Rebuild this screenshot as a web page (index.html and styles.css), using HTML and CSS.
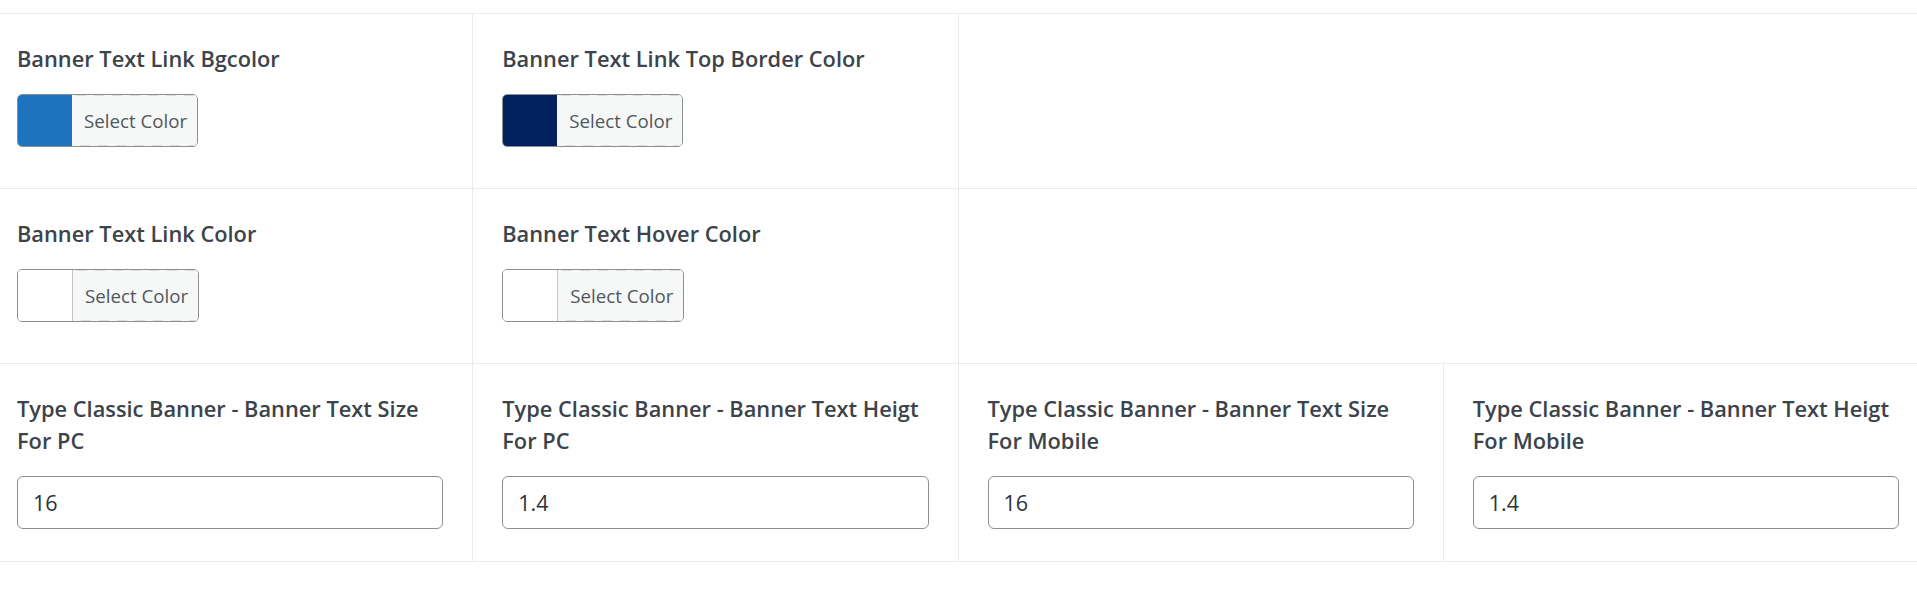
FILE: index.html
```html
<!DOCTYPE html>
<html lang="en">
<head>
<meta charset="utf-8">
<title>Banner settings</title>
<link rel="stylesheet" href="styles.css">
</head>
<body>
<div class="form">
  <div class="row">
    <div class="cell">
      <label class="label">Banner Text Link Bgcolor</label>
      <button class="picker" type="button"><span class="swatch swatch-blue"></span><span class="picker-text">Select Color</span></button>
    </div>
    <div class="cell">
      <label class="label">Banner Text Link Top Border Color</label>
      <button class="picker" type="button"><span class="swatch swatch-navy"></span><span class="picker-text">Select Color</span></button>
    </div>
  </div>
  <div class="row">
    <div class="cell">
      <label class="label">Banner Text Link Color</label>
      <button class="picker" type="button"><span class="swatch swatch-white"></span><span class="picker-text">Select Color</span></button>
    </div>
    <div class="cell">
      <label class="label">Banner Text Hover Color</label>
      <button class="picker" type="button"><span class="swatch swatch-white"></span><span class="picker-text">Select Color</span></button>
    </div>
  </div>
  <div class="row row-last">
    <div class="cell cell-input">
      <label class="label">Type Classic Banner - Banner Text Size For PC</label>
      <input class="field" type="text" value="16">
    </div>
    <div class="cell cell-input">
      <label class="label">Type Classic Banner - Banner Text Heigt For PC</label>
      <input class="field" type="text" value="1.4">
    </div>
    <div class="cell cell-input">
      <label class="label">Type Classic Banner - Banner Text Size For Mobile</label>
      <input class="field" type="text" value="16">
    </div>
    <div class="cell cell-input">
      <label class="label">Type Classic Banner - Banner Text Heigt For Mobile</label>
      <input class="field" type="text" value="1.4">
    </div>
  </div>
</div>
</body>
</html>
```
FILE: styles.css
```css
html, body {
  margin: 0;
  padding: 0;
  background: #ffffff;
  overflow-x: hidden;
}

body {
  font-family: "Open Sans", "Noto Sans", "DejaVu Sans", sans-serif;
  color: #3c434a;
}

.form {
  padding-top: 13px;
}

.row {
  display: grid;
  grid-template-columns: repeat(4, 1fr);
  margin: 0 -12px;
  border-top: 1px solid #ebebeb;
}

.row-last {
  border-bottom: 1px solid #ebebeb;
}

.cell {
  display: flex;
  flex-direction: column;
  align-items: flex-start;
  padding: 29px 29px 32px 29px;
  border-right: 1px solid #ebebeb;
  min-width: 0;
}

.label {
  display: block;
  font-size: 21.8px;
  font-weight: 600;
  line-height: 32px;
  color: #3c434a;
  margin-bottom: 19px;
}

.picker {
  display: flex;
  align-items: stretch;
  height: 53px;
  padding: 0;
  margin: 0 0 9px 0;
  border: 1px solid #8c8f94;
  border-radius: 5px;
  background: #f6f7f7;
  overflow: hidden;
  font-family: inherit;
  cursor: pointer;
}

.swatch {
  width: 54px;
  flex: none;
}

.swatch-blue { background: #1e73be; }
.swatch-navy { background: #01215e; }
.swatch-white {
  background: #ffffff;
  border-right: 1px solid #c3c4c7;
}

.picker-text {
  display: flex;
  align-items: center;
  padding: 0 10px 0 12px;
  font-size: 18.7px;
  font-weight: 400;
  color: #50575e;
  background-color: #f6f7f7;
  background-image:
    repeating-linear-gradient(90deg, #dcdcde 0 10px, transparent 10px 18px),
    repeating-linear-gradient(90deg, #dcdcde 0 10px, transparent 10px 18px);
  background-size: 100% 1px, 100% 1px;
  background-position: 4px 0, 8px 100%;
  background-repeat: no-repeat;
}

.field {
  box-sizing: border-box;
  width: 100%;
  height: 53px;
  margin: 0;
  padding: 0 15px;
  border: 1px solid #8c8f94;
  border-radius: 6px;
  background: #ffffff;
  font-family: inherit;
  font-size: 21.5px;
  color: #2c3338;
}
```
